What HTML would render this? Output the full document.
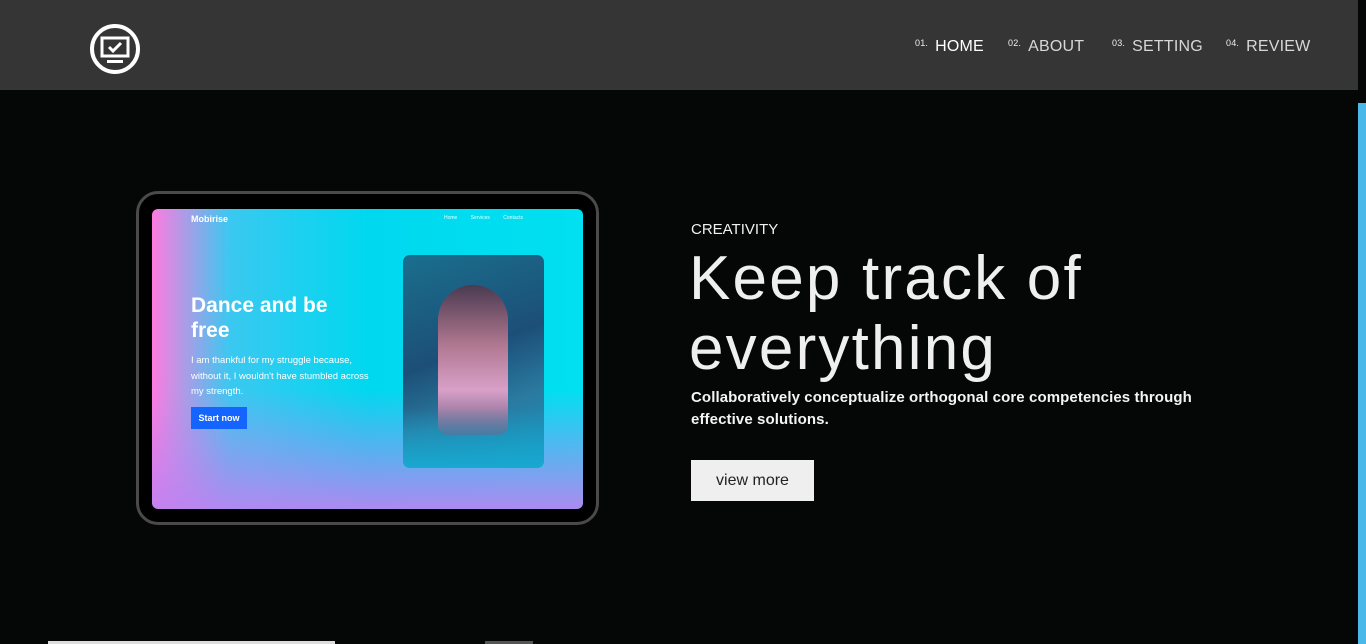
<!DOCTYPE html>
<html><head><meta charset="utf-8"><style>
*{margin:0;padding:0;box-sizing:border-box}
body{width:1366px;height:644px;background:#050606;overflow:hidden;position:relative;font-family:"Liberation Sans",sans-serif}
.hdr{position:absolute;left:0;top:0;width:1358px;height:90px;background:#353535}
.nav{position:absolute;top:38px;font-size:16px;color:#d8d8d8;letter-spacing:.2px}
.nav sup{font-size:9px;margin-right:7px;vertical-align:5px;color:#eee}
.sb{position:absolute;left:1358px;top:103px;width:8px;height:541px;background:#4ab8e8}
.tab{position:absolute;left:136px;top:191px;width:463px;height:334px;border:3px solid #4a4a4a;border-radius:22px;background:#000}
.scr{position:absolute;left:152px;top:209px;width:431px;height:300px;border-radius:6px;overflow:hidden;
background:linear-gradient(180deg,rgba(0,235,240,0) 0%,rgba(0,0,0,0) 60%,rgba(190,130,240,.9) 100%),
linear-gradient(90deg,#ff7be0 0%,#3bc8f0 18%,#00d8ef 50%,#00e0f0 100%)}
.img{position:absolute;left:251px;top:46px;width:141px;height:213px;border-radius:7px;background:linear-gradient(160deg,#1a6f8e,#1c4f78 45%,#2a7aa0 70%,#1596c0);overflow:hidden}
</style></head><body>
<div class="hdr"></div>
<svg style="position:absolute;left:89px;top:23px" width="52" height="52" viewBox="0 0 52 52">
<circle cx="26" cy="26" r="23" fill="none" stroke="#fff" stroke-width="4"/>
<rect x="13" y="15" width="26" height="18" fill="none" stroke="#fff" stroke-width="3"/>
<path d="M20 24l4 4 8-8" fill="none" stroke="#fff" stroke-width="3"/>
<rect x="18" y="37" width="16" height="3" fill="#fff"/></svg>
<div class="nav" style="left:915px;color:#fff"><sup>01.</sup>HOME</div>
<div class="nav" style="left:1008px"><sup>02.</sup>ABOUT</div>
<div class="nav" style="left:1112px"><sup>03.</sup>SETTING</div>
<div class="nav" style="left:1226px"><sup>04.</sup>REVIEW</div>
<div class="sb"></div>
<div class="tab"></div>
<div class="scr">
<div style="position:absolute;left:39px;top:5px;color:#fff;font-size:9px;font-weight:bold">Mobirise</div>
<div style="position:absolute;left:292px;top:6px;color:#e0ffff;font-size:5px;word-spacing:12px">Home Services Contacts</div>
<div style="position:absolute;left:39px;top:84px;color:#fff;font-size:21px;font-weight:bold;line-height:25px">Dance and be<br>free</div>
<div style="position:absolute;left:39px;top:144px;color:#fff;font-size:9.5px;line-height:15.5px">I am thankful for my struggle because,<br>without it, I wouldn't have stumbled across<br>my strength.</div>
<div style="position:absolute;left:39px;top:198px;width:56px;height:22px;background:#1464ff;color:#fff;font-size:9px;font-weight:bold;line-height:22px;text-align:center">Start now</div>
<div class="img"><div style="position:absolute;left:35px;top:30px;width:70px;height:150px;border-radius:35px 35px 10px 10px;background:linear-gradient(#4a3a50,#b07890 40%,#d8a0c8 70%,#6a5a80)"></div>
<div style="position:absolute;left:0;bottom:0;width:141px;height:60px;background:linear-gradient(transparent,#18a8d0)"></div></div>
</div>
<div style="position:absolute;left:691px;top:221px;color:#f0f0f0;font-size:15px">CREATIVITY</div>
<div style="position:absolute;left:689px;top:244px;color:#efefef;font-size:62px;line-height:70px;letter-spacing:2.2px">Keep track of<br>everything</div>
<div style="position:absolute;left:691px;top:387px;color:#f4f4f4;font-size:15px;font-weight:bold;line-height:22px;letter-spacing:.1px">Collaboratively conceptualize orthogonal core competencies through<br>effective solutions.</div>
<div style="position:absolute;left:691px;top:460px;width:123px;height:41px;background:#efefef;color:#222;font-size:16px;line-height:41px;text-align:center">view more</div>
<div style="position:absolute;left:48px;top:641px;width:287px;height:3px;background:#ddd"></div>
<div style="position:absolute;left:485px;top:641px;width:48px;height:3px;background:#555"></div>
</body></html>
